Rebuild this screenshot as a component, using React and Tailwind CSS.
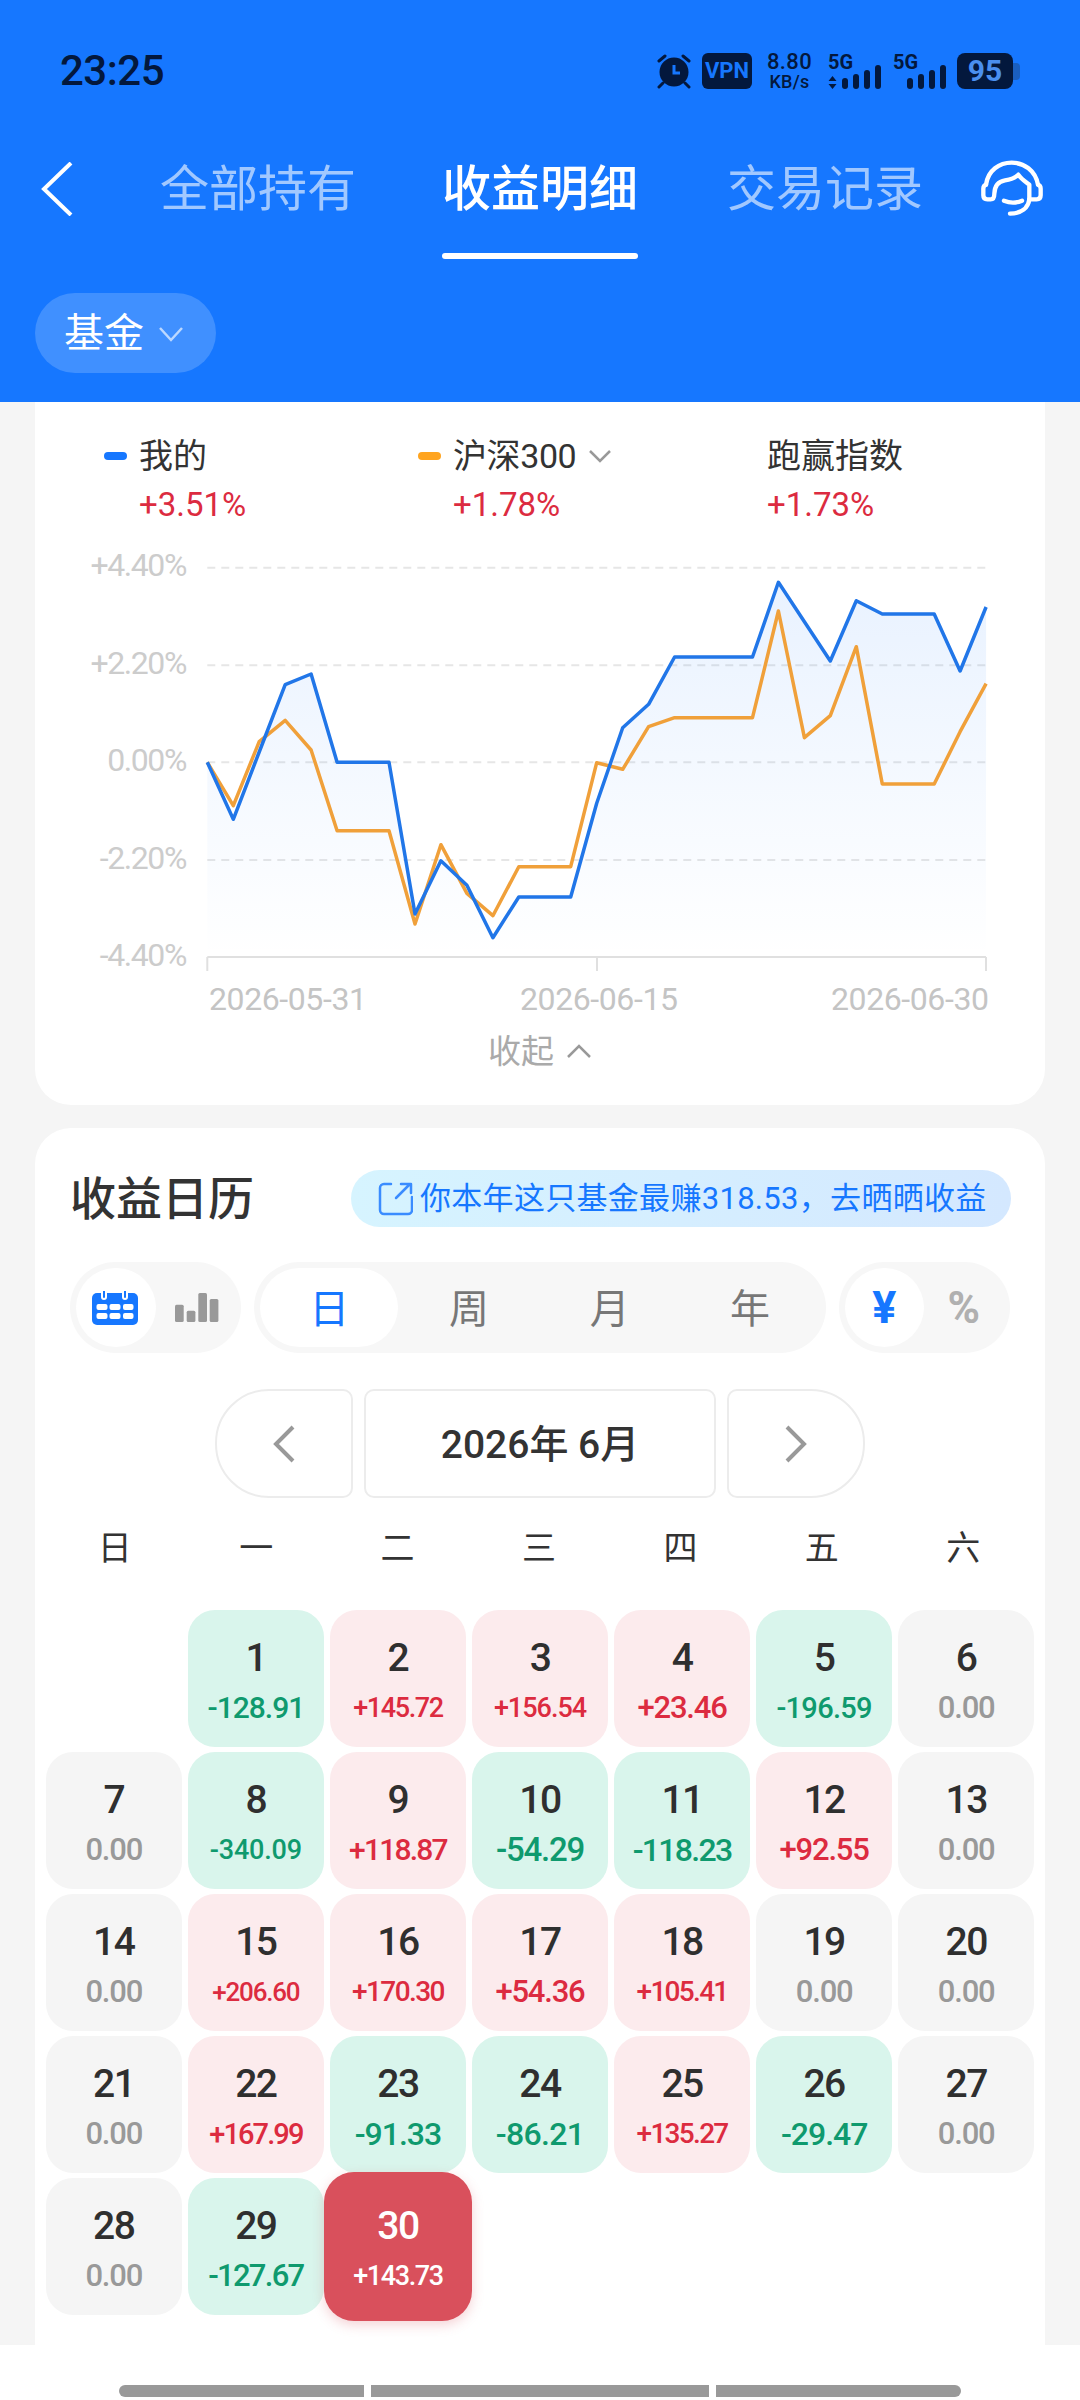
import React from 'react';

const blueA = [667,838,636,434,402,667,667,667,1122,962,1036,1193,1071,1071,1071,790,563].map(v => 540 + v / 3);
const blueB = [493,351,351,351,351,127,245,363,182,222,222,222,393,201].map(v => 540 + v / 3);
const orangeA = [667,797,605,541,630,872,872,872,1152,914,1060,1127,980,980,980,668,688].map(v => 540 + v / 3);
const orangeB = [560,533,533,533,533,213,593,527,320,732,732,732,575,431].map(v => 540 + v / 3);
const X0 = 207.3;
const STEP = 25.96;
const TOP = 540;
const pts = arr => arr.map((y, i) => `${(X0 + STEP * i - 35).toFixed(1)},${(y - TOP).toFixed(1)}`).join(' ');
const bluePts = pts([...blueA, ...blueB]);
const orangePts = pts([...orangeA, ...orangeB]);
const grid = [567.7, 665.3, 762.3, 860];
const yLabels = [['+4.40%', 567.7], ['+2.20%', 665.3], ['0.00%', 762.3], ['-2.20%', 860], ['-4.40%', 957]];

const cells = [
  null,
  ['1', '-128.91', 'g', 'text-[30px] tracking-[-1px]'],
  ['2', '+145.72', 'r', 'text-[27px] tracking-[-1.4px]'],
  ['3', '+156.54', 'r', 'text-[27px] tracking-[-1px]'],
  ['4', '+23.46', 'r', 'text-[31px] tracking-[-1.2px]'],
  ['5', '-196.59', 'g', 'text-[29px] tracking-[-0.7px]'],
  ['6', '0.00', 'n', 'text-[31px] tracking-[-1.2px]'],
  ['7', '0.00', 'n', 'text-[31px] tracking-[-1.2px]'],
  ['8', '-340.09', 'g', 'text-[27px] tracking-[-0.2px]'],
  ['9', '+118.87', 'r', 'text-[30px] tracking-[-1.8px]'],
  ['10', '-54.29', 'g', 'text-[33px] tracking-[-1.2px]'],
  ['11', '-118.23', 'g', 'text-[32px] tracking-[-1.7px]'],
  ['12', '+92.55', 'r', 'text-[31px] tracking-[-1.2px]'],
  ['13', '0.00', 'n', 'text-[31px] tracking-[-1.2px]'],
  ['14', '0.00', 'n', 'text-[31px] tracking-[-1.2px]'],
  ['15', '+206.60', 'r', 'text-[26px] tracking-[-1.2px]'],
  ['16', '+170.30', 'r', 'text-[28px] tracking-[-1.6px]'],
  ['17', '+54.36', 'r', 'text-[31px] tracking-[-1.2px]'],
  ['18', '+105.41', 'r', 'text-[28px] tracking-[-1.7px]'],
  ['19', '0.00', 'n', 'text-[31px] tracking-[-1.2px]'],
  ['20', '0.00', 'n', 'text-[31px] tracking-[-1.2px]'],
  ['21', '0.00', 'n', 'text-[31px] tracking-[-1.2px]'],
  ['22', '+167.99', 'r', 'text-[29px] tracking-[-1.9px]'],
  ['23', '-91.33', 'g', 'text-[32px] tracking-[-1px]'],
  ['24', '-86.21', 'g', 'text-[32px] tracking-[-0.7px]'],
  ['25', '+135.27', 'r', 'text-[28px] tracking-[-1.7px]'],
  ['26', '-29.47', 'g', 'text-[32px] tracking-[-1px]'],
  ['27', '0.00', 'n', 'text-[31px] tracking-[-1.2px]'],
  ['28', '0.00', 'n', 'text-[31px] tracking-[-1.2px]'],
  ['29', '-127.67', 'g', 'text-[31px] tracking-[-1.7px]'],
  ['30', '+143.73', 'a', 'text-[27px] tracking-[-1.4px]'],
];

const kinds = {
  g: { box: 'bg-[#d9f5ec] rounded-[27px]', val: 'text-[#0f9a6e]', num: 'mt-[25px] text-[#2f2f2f]' },
  r: { box: 'bg-[#fcebed] rounded-[27px]', val: 'text-[#dc2b40]', num: 'mt-[25px] text-[#2f2f2f]' },
  n: { box: 'bg-[#f5f5f5] rounded-[27px]', val: 'text-[#999999]', num: 'mt-[25px] text-[#2f2f2f]' },
  a: { box: 'bg-[#d9505c] -m-[6px] relative z-10 shadow-[0_4px_12px_rgba(217,80,92,0.25)] rounded-[30px]', val: 'text-white', num: 'mt-[31px] text-white' },
};

function Bars() {
  return (
    <svg width="45" height="24" viewBox="0 0 45 24" className="block" fill="#03183d">
      <rect x="0" y="13" width="6" height="11" rx="3" />
      <rect x="11" y="9" width="6" height="15" rx="3" />
      <rect x="22" y="5" width="6" height="19" rx="3" />
      <rect x="33" y="0" width="6" height="24" rx="3" />
    </svg>
  );
}

function Calendar() {
  return (
    <svg width="46" height="34" viewBox="0 0 46 34" fill="#1677ff">
      <rect x="0" y="2" width="46" height="32" rx="5" />
      <path d="M9 0h6v6a3 3 0 0 1-6 0zM30 0h6v6a3 3 0 0 1-6 0z" fill="#fff" />
      <path d="M12 0v6M33 0v6" stroke="#1677ff" strokeWidth="2" strokeLinecap="round" />
      <g fill="#fff">
        <rect x="4.5" y="13" width="11" height="6" rx="2" /><rect x="17.5" y="13" width="11" height="6" rx="2" /><rect x="31" y="13" width="10.5" height="6" rx="2" />
        <rect x="4.5" y="22" width="11" height="6" rx="2" /><rect x="17.5" y="22" width="11" height="6" rx="2" /><rect x="31" y="22" width="10.5" height="6" rx="2" />
      </g>
    </svg>
  );
}

export default function App() {
  return (
    <div className="w-[1080px] h-[2400px] bg-[#f5f5f5] flex flex-col overflow-hidden font-['Roboto','Noto_Sans_CJK_SC',sans-serif]">
      <header className="h-[402px] shrink-0 bg-[#1677ff] flex flex-col">
        <div className="mt-[53px] h-[36px] flex items-center justify-between pl-[60px] pr-[60px] text-[#03183d]">
          <span className="text-[42px] leading-none font-medium tracking-[-0.5px]">23:25</span>
          <div className="flex items-center">
            <svg width="36" height="36" viewBox="0 0 36 36" fill="#03183d">
              <circle cx="18" cy="19" r="14.5" />
              <path d="M18 12v8h6" fill="none" stroke="#1677ff" strokeWidth="3" />
              <path d="M3 8l6-5M33 8l-6-5M7 30l-4 4M29 30l4 4" fill="none" stroke="#03183d" strokeWidth="3" strokeLinecap="round" />
            </svg>
            <span className="ml-[10px] w-[50px] h-[36px] rounded-[6px] bg-[#03183d] text-[#1677ff] text-[22px] font-bold flex items-center justify-center leading-none">VPN</span>
            <div className="ml-[14px] w-[47px] flex flex-col items-center leading-none">
              <span className="text-[22px] tracking-[0.4px] font-medium h-[22px]">8.80</span>
              <span className="text-[18px] tracking-[0.3px] font-medium h-[18px]">KB/s</span>
            </div>
            <div className="ml-[15px] relative w-[56px] h-[36px]">
              <span className="absolute left-0 top-0 text-[20px] font-bold leading-[18px]">5G</span>
              <svg className="absolute left-0 bottom-0" width="9" height="13" viewBox="0 0 9 13" fill="#03183d"><path d="M4.5 0l4 5h-8zM4.5 13l4-5h-8z" /></svg>
              <div className="absolute left-[14px] bottom-0"><Bars /></div>
            </div>
            <div className="ml-[9px] relative w-[64px] h-[36px]">
              <span className="absolute left-0 top-0 text-[20px] font-bold leading-[18px]">5G</span>
              <div className="absolute left-[14px] bottom-0"><Bars /></div>
            </div>
            <span className="w-[56px] h-[36px] rounded-[8px] bg-[#03183d] text-[#4a8fef] text-[30px] font-bold flex items-center justify-center leading-none">95</span>
            <span className="w-[7px] h-[17px] rounded-r-[4px] bg-[#1a5fbf]" />
          </div>
        </div>

        <div className="mt-[48px] flex items-start">
          <div className="ml-[41px] h-[104px] flex items-center">
            <svg width="32" height="54" viewBox="0 0 32 54" fill="none" stroke="#fff" strokeWidth="4"><path d="M30 1L3 27l27 26" /></svg>
          </div>
          <div className="ml-[87px] h-[104px] flex items-center text-[49px] text-white/60 leading-none">全部持有</div>
          <div className="ml-[86px] w-[196px] flex flex-col items-center">
            <div className="h-[104px] flex items-center text-[49px] text-white font-medium leading-none">收益明细</div>
            <div className="mt-[12px] w-full h-[6px] rounded-full bg-white" />
          </div>
          <div className="ml-[89px] h-[104px] flex items-center text-[49px] text-white/60 leading-none">交易记录</div>
          <div className="ml-[57px] h-[104px] flex items-center">
            <svg width="64" height="62" viewBox="60 48 192 186" fill="none" stroke="#fff" strokeWidth="13" strokeLinecap="round" strokeLinejoin="round">
              <path d="M78 128C84 85 118 62 155 62C192 62 226 85 234 128" />
              <path d="M78 128C72 130 70 134 70 140V160C70 168 75 172 82 172H92C100 172 103 165 103 155C104 130 115 118 135 115C150 113 165 108 175 98C185 112 198 120 208 128V172" />
              <path d="M234 128C240 130 242 134 242 140V160C242 168 237 172 230 172H208" />
              <path d="M208 172C205 198 185 214 150 215" />
              <path d="M132 176C148 183 170 183 186 176" />
            </svg>
          </div>
        </div>

        <div className="ml-[35px] mt-[34px] w-[181px] h-[80px] pt-[2px] rounded-full bg-[#4090ff] flex items-center pl-[29px] text-white text-[40px] leading-none">
          基金
          <svg className="ml-[14px]" width="26" height="16" viewBox="0 0 26 16" fill="none" stroke="#bcd8ff" strokeWidth="2.5"><path d="M2 2l11 12L24 2" /></svg>
        </div>
      </header>

      <section className="mx-[35px] mt-0 h-[703px] shrink-0 bg-white rounded-b-[36px] flex flex-col">
        <div className="h-[138px] flex text-[34px] leading-none">
          <div className="ml-[69px] w-[314px] flex">
            <span className="mt-[50px] w-[23px] h-[8px] rounded-full bg-[#1677ff]" />
            <div className="ml-[12px] flex flex-col">
              <span className="mt-[37px] text-[#333333] leading-[34px]">我的</span>
              <span className="mt-[16px] text-[33px] text-[#dc2b40] leading-[32px]">+3.51%</span>
            </div>
          </div>
          <div className="w-[349px] flex">
            <span className="mt-[50px] w-[23px] h-[8px] rounded-full bg-[#ffa41f]" />
            <div className="ml-[12px] flex flex-col">
              <div className="mt-[37px] flex items-center text-[#333333] leading-[34px] tracking-[-0.4px]">
                沪深300
                <svg className="ml-[12px]" width="24" height="14" viewBox="0 0 24 14" fill="none" stroke="#999" strokeWidth="2.5"><path d="M2 2l10 10L22 2" /></svg>
              </div>
              <span className="mt-[16px] text-[33px] text-[#dc2b40] leading-[32px]">+1.78%</span>
            </div>
          </div>
          <div className="flex flex-col">
            <span className="mt-[37px] text-[#333333] leading-[34px]">跑赢指数</span>
            <span className="mt-[16px] text-[33px] text-[#dc2b40] leading-[32px]">+1.73%</span>
          </div>
        </div>
        <svg width="1010" height="485" viewBox="0 0 1010 485" className="block shrink-0">
          <defs>
            <linearGradient id="area" gradientUnits="userSpaceOnUse" x1="0" y1="25" x2="0" y2="417">
              <stop offset="0" stopColor="#1677ff" stopOpacity="0.1" />
              <stop offset="1" stopColor="#1677ff" stopOpacity="0" />
            </linearGradient>
          </defs>
          {grid.map(y => (
            <line key={y} x1="172.3" x2="951" y1={y - TOP} y2={y - TOP} stroke="#e6e6e6" strokeWidth="2" strokeDasharray="8 6" />
          ))}
          <path d="M172.3 417H951M172.3 417v14M562 417v14M951 417v14" stroke="#e0e0e0" strokeWidth="2" fill="none" />
          <polygon points={`172.3,417 ${bluePts} 951,417`} fill="url(#area)" />
          <polyline points={orangePts} fill="none" stroke="#f0a03a" strokeWidth="3.5" strokeLinejoin="round" />
          <polyline points={bluePts} fill="none" stroke="#2176e8" strokeWidth="3.5" strokeLinejoin="round" />
          {yLabels.map(([t, y]) => (
            <text key={t} x="151" y={y - TOP + 8.5} textAnchor="end" fontSize="32" letterSpacing="-1.4" fill="#cccccc">{t}</text>
          ))}
          <text x="174" y="470" fontSize="32" letterSpacing="-0.4" fill="#c4c4c4">2026-05-31</text>
          <text x="485" y="470" fontSize="32" letterSpacing="-0.4" fill="#c4c4c4">2026-06-15</text>
          <text x="796" y="470" fontSize="32" letterSpacing="-0.4" fill="#c4c4c4">2026-06-30</text>
        </svg>
        <div className="mt-[10px] flex items-center justify-center text-[33px] text-[#aaaaaa] leading-none">
          <span>收起</span>
          <svg className="ml-[12px]" width="26" height="15" viewBox="0 0 26 15" fill="none" stroke="#999" strokeWidth="2.5"><path d="M2 13L13 2l11 11" /></svg>
        </div>
      </section>

      <section className="mx-[35px] mt-[23px] flex-1 bg-white rounded-t-[36px] flex flex-col relative">
        <div className="mt-[42px] h-[57px] flex items-center">
          <h2 className="ml-[35px] w-[184px] text-[46px] font-medium text-[#333333] leading-none">收益日历</h2>
          <div className="ml-[97px] w-[660px] h-[57px] rounded-full bg-gradient-to-r from-[#d6f4ff] to-[#d4e8ff] flex items-center pl-[27px] text-[#1677ff] text-[31px] tracking-[0.3px] leading-none">
            <svg width="35" height="34" viewBox="0 0 35 34" fill="none" stroke="#3a8cff" strokeWidth="2.5" strokeLinecap="round" strokeLinejoin="round">
              <path d="M13 2H6a4 4 0 0 0-4 4v22a4 4 0 0 0 4 4h24a4 4 0 0 0 4-4V15" />
              <path d="M18 16L31 3M23 2h10v9" />
            </svg>
            <span className="ml-[7px] whitespace-nowrap">你本年这只基金最赚318.53，去晒晒收益</span>
          </div>
        </div>

        <div className="mt-[35px] ml-[35px] flex h-[91px]">
          <div className="w-[171px] rounded-full bg-[#f7f7f7] p-[6px] flex items-center">
            <div className="w-[80px] h-[79px] pr-[2px] rounded-full bg-white flex items-center justify-center"><Calendar /></div>
            <svg className="ml-[19px]" width="44" height="29" viewBox="0 0 44 29" fill="#999">
              <rect x="0" y="11.7" width="8.7" height="17.3" rx="1.5" /><rect x="11.7" y="17.7" width="8.7" height="11.3" rx="1.5" /><rect x="23.3" y="0" width="8.7" height="29" rx="1.5" /><rect x="34.7" y="6" width="8.7" height="23" rx="1.5" />
            </svg>
          </div>
          <div className="ml-[13px] w-[572px] rounded-full bg-[#f7f7f7] p-[6px] flex items-center text-[40px] leading-none text-[#777777]">
            <div className="w-[139px] h-[79px] pt-[5px] rounded-full bg-white flex items-center justify-center text-[#1677ff]">日</div>
            <div className="w-[142px] pt-[5px] text-center">周</div>
            <div className="w-[141px] pt-[5px] text-center">月</div>
            <div className="w-[141px] pt-[5px] text-center">年</div>
          </div>
          <div className="ml-[13px] w-[171px] rounded-full bg-[#f7f7f7] p-[6px] flex items-center font-bold leading-none">
            <div className="w-[79px] h-[79px] rounded-full bg-white flex items-center justify-center text-[45px] text-[#1677ff]">¥</div>
            <div className="w-[81px] text-center text-[44px] text-[#b0b0b0]">%</div>
          </div>
        </div>

        <div className="mt-[36px] flex justify-center gap-[11px] h-[109px]">
          <div className="w-[138px] rounded-l-[54px] rounded-r-[10px] border-2 border-[#ececec] flex items-center justify-center">
            <svg width="24" height="38" viewBox="0 0 24 38" fill="none" stroke="#999" strokeWidth="4"><path d="M21 2L4 19l17 17" /></svg>
          </div>
          <div className="w-[352px] pt-[4px] rounded-[10px] border-2 border-[#ececec] flex items-center justify-center text-[39px] text-[#333333] font-medium leading-none">2026年 6月</div>
          <div className="w-[138px] rounded-r-[54px] rounded-l-[10px] border-2 border-[#ececec] flex items-center justify-center">
            <svg width="24" height="38" viewBox="0 0 24 38" fill="none" stroke="#999" strokeWidth="4"><path d="M3 2l17 17L3 36" /></svg>
          </div>
        </div>

        <div className="mt-[33px] ml-[9px] w-[990px] grid grid-cols-7 text-[34px] text-[#333333] leading-none text-center">
          {['日', '一', '二', '三', '四', '五', '六'].map(d => <span key={d}>{d}</span>)}
        </div>

        <div className="mt-[45px] ml-[11px] w-[988px] grid grid-cols-7 gap-x-[6.5px] gap-y-[5.5px] auto-rows-[136.5px]">
          {cells.map((c, i) => {
            if (!c) return <div key={i} />;
            const k = kinds[c[2]];
            return (
              <div key={i} className={`flex flex-col items-center ${k.box}`}>
                <span className={`h-[46px] text-[39px] font-medium tracking-[-1.5px] leading-[46px] ${k.num}`}>{c[0]}</span>
                <span className={`mt-[9px] h-[36px] leading-[36px] font-medium ${c[3]} ${k.val}`}>{c[1]}</span>
              </div>
            );
          })}
        </div>
      </section>

      <footer className="h-[55px] shrink-0 bg-white flex items-end justify-center gap-[7px] pb-[3px]">
        <span className="w-[245px] h-[12px] rounded-l-full bg-[#999999]" />
        <span className="w-[338px] h-[12px] bg-[#999999]" />
        <span className="w-[245px] h-[12px] rounded-r-full bg-[#999999]" />
      </footer>
    </div>
  );
}
